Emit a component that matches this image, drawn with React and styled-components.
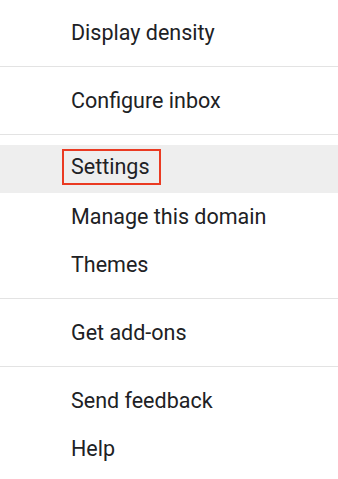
import styled, { createGlobalStyle } from "styled-components";

const GlobalStyle = createGlobalStyle`
  html, body {
    margin: 0;
    padding: 0;
    background: #ffffff;
  }
  body {
    font-family: Roboto, "Liberation Sans", Arial, sans-serif;
  }
`;

const StyledMenu = styled.div`
  width: 338px;
  height: 479px;
  box-sizing: border-box;
  padding-top: 9px;
  background: #fff;
  display: flex;
  flex-direction: column;
  overflow: hidden;
`;

const Item = styled.div`
  height: 48px;
  display: flex;
  align-items: center;
  padding-left: 71px;
  font-size: 21.5px;
  line-height: 1;
  color: #202124;
  background: ${(p) => (p.$active ? "#eeeeee" : "transparent")};
  cursor: pointer;
`;

const Marked = styled.span`
  display: flex;
  align-items: center;
  box-sizing: border-box;
  height: 36px;
  margin: 0 0 4px -9px;
  padding: 0 9px 0 7px;
  border: 2px solid #ea3a22;
`;

const Divider = styled.hr`
  border: none;
  height: 1px;
  background: #e3e3e3;
  margin: 9px 0 10px;
`;

const sections = [
  ["Display density"],
  ["Configure inbox"],
  ["Settings", "Manage this domain", "Themes"],
  ["Get add-ons"],
  ["Send feedback", "Help"],
];

export default function App() {
  return (
    <>
      <GlobalStyle />
      <StyledMenu>
        {sections.map((items, i) => (
          <div key={i}>
            {i > 0 && <Divider />}
            {items.map((label) => (
              <Item key={label} $active={label === "Settings"}>
                {label === "Settings" ? <Marked>{label}</Marked> : label}
              </Item>
            ))}
          </div>
        ))}
      </StyledMenu>
    </>
  );
}
